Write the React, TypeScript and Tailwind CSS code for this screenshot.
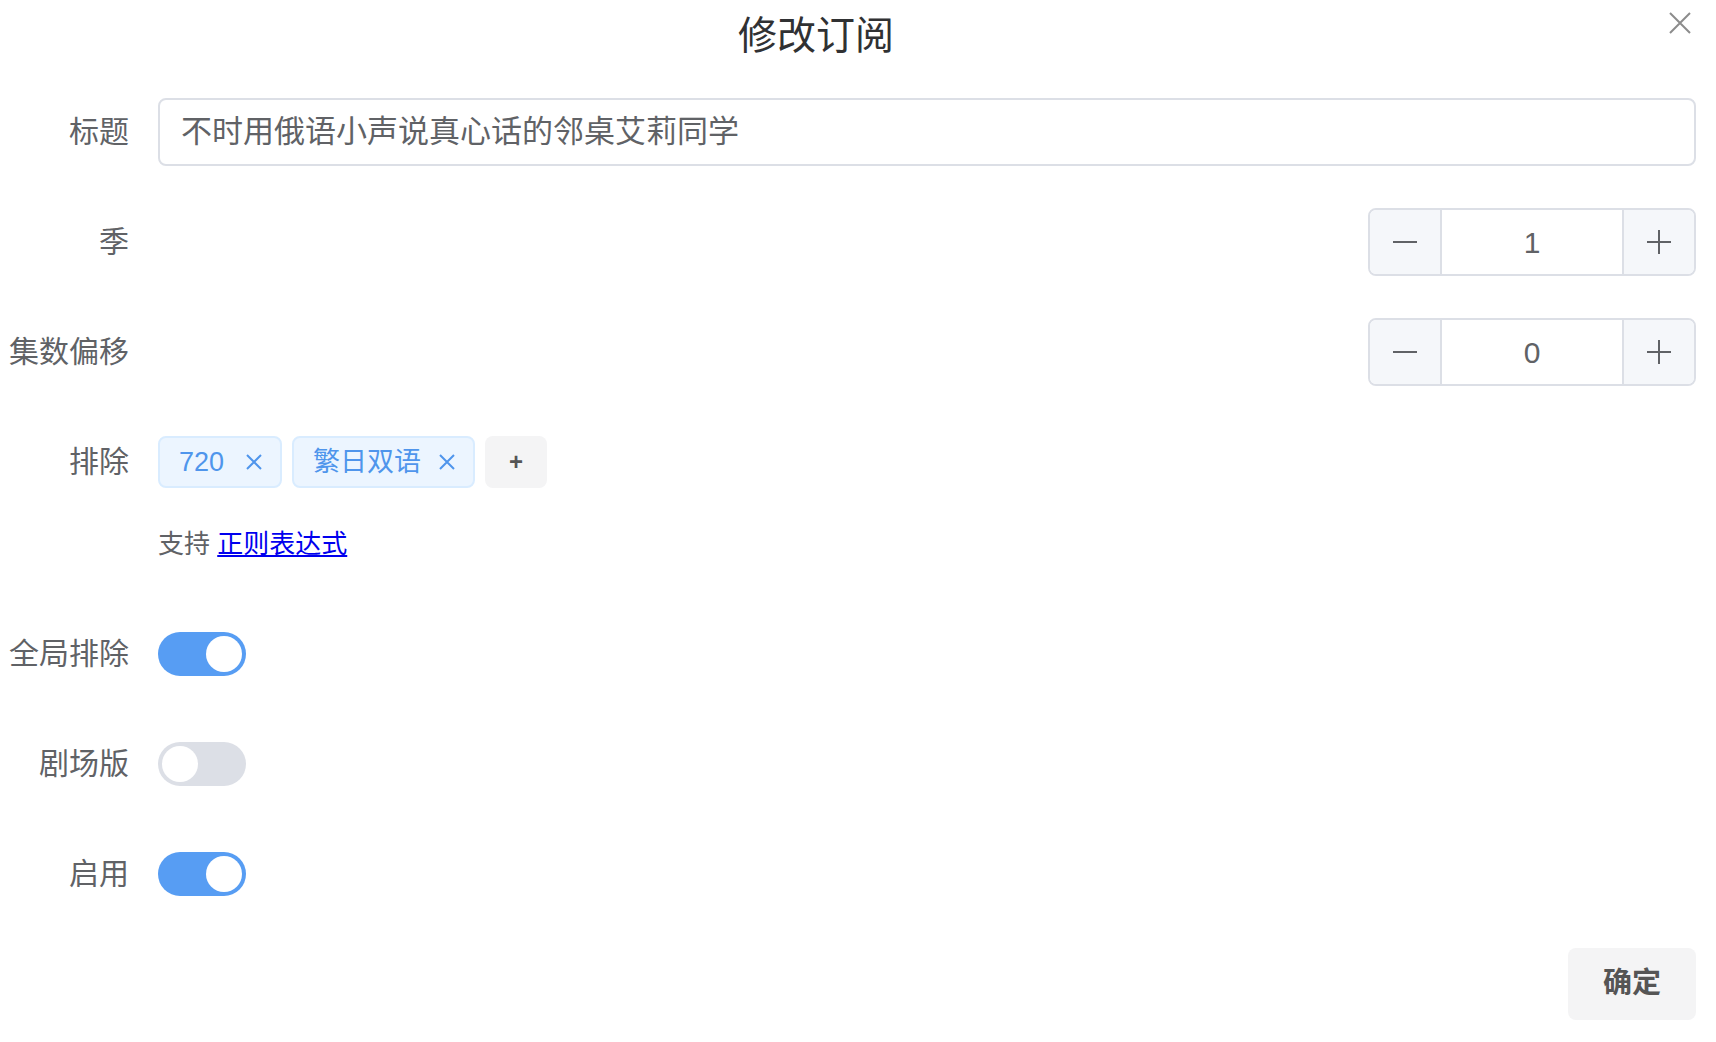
import React from "react";

const FONT = { fontFamily: '"Liberation Sans", "Noto Sans CJK SC", sans-serif' };

function Label({ children }: { children: React.ReactNode }) {
  return (
    <div className="w-[129px] shrink-0 text-right text-[30px] leading-[68px] text-[#606266] whitespace-nowrap">
      {children}
    </div>
  );
}

function NumberInput({ value }: { value: string }) {
  return (
    <div className="flex h-[68px] w-[328px] overflow-hidden rounded-[8px] border-2 border-[#dcdfe6]">
      <div className="flex w-[72px] items-center justify-center border-r-2 border-[#dcdfe6] bg-[#f5f7fa]">
        <div className="h-[2px] w-[24px] bg-[#606266]" />
      </div>
      <div className="flex flex-1 items-center justify-center bg-white text-[30px] text-[#606266]">{value}</div>
      <div className="flex w-[72px] items-center justify-center border-l-2 border-[#dcdfe6] bg-[#f5f7fa]">
        <svg width="26" height="26" viewBox="0 0 26 26">
          <path d="M13 1v24M1 13h24" stroke="#606266" strokeWidth="2" fill="none" />
        </svg>
      </div>
    </div>
  );
}

function Toggle({ on }: { on: boolean }) {
  return (
    <div
      className={
        on
          ? "flex h-[44px] w-[88px] items-center justify-end rounded-full bg-[#579df3] px-[4px]"
          : "flex h-[44px] w-[88px] items-center justify-start rounded-full bg-[#dcdfe6] px-[4px]"
      }
    >
      <div className="h-[36px] w-[36px] rounded-full bg-white" />
    </div>
  );
}

function Tag({ text, width }: { text: string; width: string }) {
  return (
    <div
      className={`flex h-[52px] ${width} items-center justify-between rounded-[8px] border-2 border-[#d9ecff] bg-[#ecf5ff] pl-[19px] pr-[18px] text-[27px] text-[#4f95ec]`}
    >
      <span>{text}</span>
      <svg width="16" height="16" viewBox="0 0 16 16">
        <path d="M1 1l14 14M15 1L1 15" stroke="#4f95ec" strokeWidth="2" fill="none" />
      </svg>
    </div>
  );
}

export default function App() {
  return (
    <div className="relative h-[1042px] w-full bg-white" style={FONT}>
      <div className="flex h-[72px] items-center justify-center pr-[84px]">
        <div className="text-[39px] text-[#303133]">修改订阅</div>
      </div>
      <button className="absolute right-[25px] top-[12px] flex h-[22px] w-[22px] items-center justify-center">
        <svg width="22" height="22" viewBox="0 0 22 22">
          <path d="M1 1l20 20M21 1L1 21" stroke="#8c8c8c" strokeWidth="2" fill="none" />
        </svg>
      </button>

      <div className="flex flex-col pr-[20px] pt-[26px]">
        <div className="flex items-center gap-[29px]">
          <Label>标题</Label>
          <div className="flex h-[68px] flex-1 items-center rounded-[8px] border-2 border-[#dcdfe6] px-[21px] text-[31px] text-[#606266]">
            不时用俄语小声说真心话的邻桌艾莉同学
          </div>
        </div>

        <div className="mt-[42px] flex items-center gap-[29px]">
          <Label>季</Label>
          <div className="flex flex-1 justify-end">
            <NumberInput value="1" />
          </div>
        </div>

        <div className="mt-[42px] flex items-center gap-[29px]">
          <Label>集数偏移</Label>
          <div className="flex flex-1 justify-end">
            <NumberInput value="0" />
          </div>
        </div>

        <div className="mt-[42px] flex items-start gap-[29px]">
          <Label>排除</Label>
          <div className="flex flex-1 flex-col">
            <div className="flex h-[68px] items-center gap-[10px]">
              <Tag text="720" width="w-[124px]" />
              <Tag text="繁日双语" width="w-[183px]" />
              <div className="flex h-[52px] w-[62px] items-center justify-center rounded-[8px] bg-[#f4f4f5] text-[24px] font-bold text-[#555]">
                +
              </div>
            </div>
            <div className="mt-[32px] text-[26px] leading-[32px] text-[#606266]">
              支持 <a href="#" className="text-[#0000ee] underline">正则表达式</a>
            </div>
          </div>
        </div>

        <div className="mt-[60px] flex items-center gap-[29px]">
          <Label>全局排除</Label>
          <Toggle on={true} />
        </div>

        <div className="mt-[42px] flex items-center gap-[29px]">
          <Label>剧场版</Label>
          <Toggle on={false} />
        </div>

        <div className="mt-[42px] flex items-center gap-[29px]">
          <Label>启用</Label>
          <Toggle on={true} />
        </div>

        <div className="mt-[40px] flex justify-end">
          <div className="flex h-[72px] w-[128px] items-center justify-center rounded-[8px] bg-[#f4f4f5] text-[29px] font-bold text-[#555]">
            确定
          </div>
        </div>
      </div>
    </div>
  );
}
